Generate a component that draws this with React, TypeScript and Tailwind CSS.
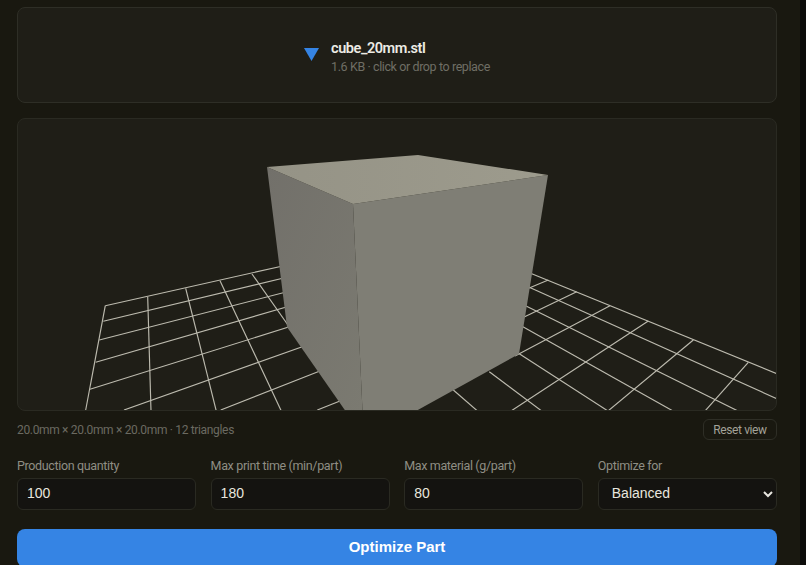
import React from 'react';

const uiFont = "font-['Roboto',sans-serif]";
const fieldClass =
    "h-[32px] w-full rounded-[6px] border border-[#2a2a22] bg-[#141310] px-[9px] pb-[2px] font-['Liberation_Sans',sans-serif] text-[14px] text-[#e8e6df] outline-none";

// [x1, y1, x2, y2] in page coordinates, measured off the reference
const gridLines = [
    [105.3, 305.7, 285, 265.5],
    [103.3, 321.3, 290, 276.5],
    [99.3, 340, 290, 291],
    [95.7, 362.3, 295, 304.5],
    [90, 389.3, 295, 325],
    [124, 410, 310, 344],
    [220.7, 410, 325, 369],
    [317.3, 410, 345, 399],
    [105.3, 305.7, 85.5, 411],
    [147.7, 296.7, 151, 411],
    [185.7, 288.3, 216.3, 411],
    [220, 280.7, 281.3, 411],
    [252, 274, 295, 335],
    [525, 271, 777, 373.7],
    [522, 284, 777, 398.8],
    [520, 303, 738, 411],
    [518, 324, 673, 411],
    [515, 351, 608, 411],
    [489.3, 371.7, 541.7, 411],
    [453.3, 390, 477.5, 411],
    [748.3, 362.3, 705, 411],
    [693.3, 340, 608, 411],
    [648.3, 321, 511, 411],
    [610, 305.7, 515, 356],
    [576.7, 291.7, 520, 319],
    [548.3, 280, 522, 291],
];

function Viewer() {
    return (
        <svg viewBox="18 119 758 291" className="block h-full w-full">
            <defs>
                <linearGradient id="topFace" x1="0" y1="0" x2="1" y2="0">
                    <stop offset="0" stopColor="#959386" />
                    <stop offset="1" stopColor="#9d9b8d" />
                </linearGradient>
                <linearGradient id="leftFace" x1="0" y1="0" x2="1" y2="1">
                    <stop offset="0" stopColor="#72706a" />
                    <stop offset="1" stopColor="#7b7a71" />
                </linearGradient>
            </defs>
            {gridLines.map(([x1, y1, x2, y2], i) => (
                <line key={i} x1={x1} y1={y1} x2={x2} y2={y2} stroke="#bdbbaf" strokeWidth="1.15" />
            ))}
            <polygon points="267,167 353,204 362.5,411 345.5,411 287,327" fill="url(#leftFace)" />
            <polygon points="353,204 548,175 519,354 416,411 362.5,411" fill="#7f7e75" />
            <polygon points="267,167 418,155 548,175 353,204" fill="url(#topFace)" />
        </svg>
    );
}

function Field({ label, value }: { label: string; value: string }) {
    return (
        <label className="flex min-w-0 flex-col gap-[3px]">
            <span className={`${uiFont} text-[12.5px] leading-[18px] tracking-[-0.35px] text-[#8f8e84]`}>{label}</span>
            <input className={fieldClass} defaultValue={value} />
        </label>
    );
}

export default function App() {
    return (
        <div className="flex h-[565px] w-[806px] overflow-hidden bg-[#0c0c0a]">
            <div className="h-full w-[800px] shrink-0 bg-[#191810] pl-[17px] pr-[23px] pt-[7px]">
                {/* Upload */}
                <div className="flex h-[96px] items-center justify-center gap-[12px] rounded-[8px] border border-[#2e2e26] bg-[#1f1e17]">
                    <svg width="15" height="13" viewBox="0 0 15 13" className="mb-[1px] shrink-0">
                        <polygon points="0,0 15,0 7.5,13" fill="#3584e4" />
                    </svg>
                    <div className={`${uiFont} pt-[5px]`}>
                        <div className="text-[14.5px] font-semibold leading-[19px] tracking-[-0.45px] text-[#ecebe4]">cube_20mm.stl</div>
                        <div className="text-[12.5px] leading-[18px] tracking-[-0.4px] text-[#6f6e65]">1.6 KB · click or drop to replace</div>
                    </div>
                </div>

                {/* Preview */}
                <div className="mt-[15px] h-[293px] overflow-hidden rounded-[8px] border border-[#2a2a22] bg-[#1f1e17]">
                    <Viewer />
                </div>

                <div className="mt-[8px] flex items-center justify-between">
                    <span className={`${uiFont} text-[12px] tracking-[-0.33px] text-[#6b6a61]`}>20.0mm × 20.0mm × 20.0mm · 12 triangles</span>
                    <button className={`${uiFont} h-[21px] w-[74px] rounded-[6px] border border-[#2e2e26] text-[12px] tracking-[-0.4px] text-[#a3a298]`}>
                        Reset view
                    </button>
                </div>

                {/* Constraints */}
                <div className="mt-[17px] grid grid-cols-4 gap-[14.4px]">
                    <Field label="Production quantity" value="100" />
                    <Field label="Max print time (min/part)" value="180" />
                    <Field label="Max material (g/part)" value="80" />
                    <label className="flex min-w-0 flex-col gap-[3px]">
                        <span className={`${uiFont} text-[12.5px] leading-[18px] tracking-[-0.35px] text-[#8f8e84]`}>Optimize for</span>
                        <select className={`${fieldClass} [color-scheme:dark]`} defaultValue="Balanced">
                            <option>Balanced</option>
                        </select>
                    </label>
                </div>

                <button className="mt-[19px] h-[38px] w-full rounded-[8px] bg-[#3584e4] pb-[1px] font-['Liberation_Sans',sans-serif] text-[15px] font-bold text-white">
                    Optimize Part
                </button>
            </div>
        </div>
    );
}
